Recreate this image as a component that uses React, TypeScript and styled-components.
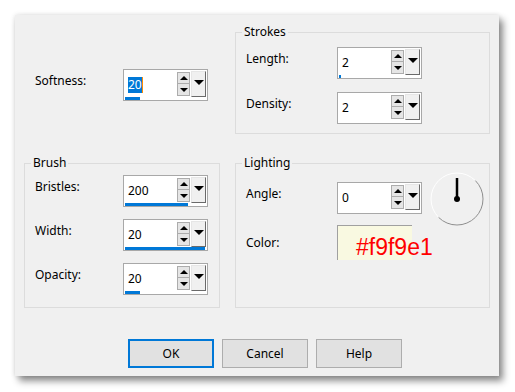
import React from "react";
import styled, { createGlobalStyle } from "styled-components";

const GlobalStyle = createGlobalStyle`
  html, body {
    margin: 0;
    padding: 0;
    background: #ffffff;
  }
  body {
    font-family: "Noto Sans", "Segoe UI", sans-serif;
    font-size: 12px;
    color: #000000;
  }
`;

const Page = styled.div`
  width: 515px;
  height: 392px;
  padding: 15px 0 0 15px;
  box-sizing: border-box;
`;

const Dialog = styled.div`
  width: 484px;
  height: 361px;
  box-sizing: border-box;
  background: #f0f0f0;
  padding: 9px 11px 0 9px;
  box-shadow: 4px 5px 7px rgba(0, 0, 0, 0.45), 0 0 5px rgba(0, 0, 0, 0.12);
  display: flex;
  flex-direction: column;
`;

const Grid = styled.div`
  display: grid;
  grid-template-columns: 196px 255px;
  grid-template-rows: 110px 153px;
  column-gap: 15px;
  row-gap: 21px;
`;

const Cell = styled.div`
  padding: 45px 0 0 11px;
`;

const Group = styled.fieldset`
  margin: 0;
  padding: 0;
  min-width: 0;
  border: 1px solid #dcdcdc;
  box-sizing: border-box;
  height: 100%;
`;

const Legend = styled.legend`
  margin-left: 6px;
  padding: 0 2px;
  line-height: 16px;
  font-size: 12px;
`;

const Rows = styled.div<{ $top: number; $gap: number }>`
  display: flex;
  flex-direction: column;
  padding: ${(p) => p.$top}px 0 0 10px;
  gap: ${(p) => p.$gap}px;
`;

const Row = styled.div<{ $center?: boolean }>`
  display: flex;
  align-items: ${(p) => (p.$center ? "center" : "flex-start")};
`;

const Label = styled.div<{ $w: number; $center?: boolean }>`
  width: ${(p) => p.$w}px;
  flex-shrink: 0;
  line-height: 16px;
  padding-top: ${(p) => (p.$center ? 0 : 4)}px;
`;

const Spin = styled.div`
  width: 85px;
  height: 32px;
  box-sizing: border-box;
  border: 1px solid #a8a8a8;
  background: #ffffff;
  display: flex;
  flex-direction: column;
  flex-shrink: 0;
`;

const SpinBody = styled.div`
  display: flex;
  height: 27px;
`;

const SpinText = styled.div`
  flex: 1;
  display: flex;
  align-items: center;
  padding: 2px 0 0 4px;
  line-height: 16px;
`;

const Selected = styled.span`
  background: #0078d7;
  color: #ffffff;
  border-right: 1px solid #ff8c00;
`;

const Arrows = styled.div`
  width: 13px;
  margin: 2px 1px 0 0;
  display: flex;
  flex-direction: column;
`;

const ArrowBtn = styled.div<{ $down?: boolean }>`
  height: 12px;
  box-sizing: border-box;
  border: 1px solid #acacac;
  border-top: ${(p) => (p.$down ? "none" : "1px solid #acacac")};
  background: #e5e5e5;
  display: flex;
  align-items: center;
  justify-content: center;
`;

const Tri = styled.span<{ $down?: boolean; $size: number }>`
  width: 0;
  height: 0;
  border-left: ${(p) => p.$size}px solid transparent;
  border-right: ${(p) => p.$size}px solid transparent;
  ${(p) =>
    p.$down
      ? `border-top: ${p.$size}px solid #000;`
      : `border-bottom: ${p.$size}px solid #000;`}
`;

const Drop = styled.div`
  width: 15px;
  height: 26px;
  margin: 1px 1px 0 0;
  box-sizing: border-box;
  background: #f0f0f0;
  border-top: 1px solid #e6e6e6;
  border-left: 1px solid #e6e6e6;
  border-right: 1px solid #6a6a6a;
  border-bottom: 1px solid #6a6a6a;
  display: flex;
  align-items: center;
  justify-content: center;
  padding-bottom: 3px;
`;

const Track = styled.div`
  height: 3px;
  padding-left: 1px;
`;

const Fill = styled.div`
  height: 3px;
  background: #0078d7;
`;

const Swatch = styled.div`
  width: 75px;
  height: 35px;
  box-sizing: border-box;
  background: #f9f9e1;
  border-top: 1px solid #a0a0a0;
  border-left: 1px solid #a0a0a0;
  padding: 8px 0 0 18px;
  white-space: nowrap;
`;

const SwatchText = styled.span`
  font-family: "Liberation Sans", Arial, sans-serif;
  font-size: 23px;
  line-height: 26px;
  color: #ff0000;
`;

const Dial = styled.svg`
  flex-shrink: 0;
  margin: -11px 0 -13px 7px;
`;

const ButtonRow = styled.div`
  display: flex;
  gap: 8px;
  margin-top: 31px;
  padding-left: 104px;
`;

const Button = styled.div<{ $primary?: boolean }>`
  width: 86px;
  height: 29px;
  box-sizing: border-box;
  background: #e1e1e1;
  border: ${(p) => (p.$primary ? "2px solid #0078d7" : "1px solid #adadad")};
  display: flex;
  align-items: center;
  justify-content: center;
  line-height: 16px;
`;

function SpinBox({
  value,
  fill,
  selected,
}: {
  value: string;
  fill: number;
  selected?: boolean;
}) {
  return (
    <Spin>
      <SpinBody>
        <SpinText>{selected ? <Selected>{value}</Selected> : value}</SpinText>
        <Arrows>
          <ArrowBtn>
            <Tri $size={4} />
          </ArrowBtn>
          <ArrowBtn $down>
            <Tri $size={4} $down />
          </ArrowBtn>
        </Arrows>
        <Drop>
          <Tri $size={5} $down />
        </Drop>
      </SpinBody>
      <Track>
        <Fill style={{ width: `${Math.round(fill * 80)}px` }} />
      </Track>
    </Spin>
  );
}

function AngleDial() {
  return (
    <Dial width="56" height="56" viewBox="0 0 56 56">
      <circle cx="28" cy="28" r="26" fill="none" stroke="#ffffff" strokeWidth="1" />
      <path d="M 46.4 9.6 A 26 26 0 0 1 9.6 46.4" fill="none" stroke="#8a8a8a" strokeWidth="1" />
      <line x1="28" y1="28" x2="28" y2="7" stroke="#000" strokeWidth="2.5" />
      <circle cx="28" cy="28" r="3" fill="#000" />
    </Dial>
  );
}

export default function App() {
  return (
    <Page>
      <GlobalStyle />
      <Dialog>
        <Grid>
          <Cell>
            <Row>
              <Label $w={88}>Softness:</Label>
              <SpinBox value="20" fill={0.19} selected />
            </Row>
          </Cell>
          <Group>
            <Legend>Strokes</Legend>
            <Rows $top={7} $gap={13}>
              <Row>
                <Label $w={91}>Length:</Label>
                <SpinBox value="2" fill={0.03} />
              </Row>
              <Row>
                <Label $w={91}>Density:</Label>
                <SpinBox value="2" fill={0} />
              </Row>
            </Rows>
          </Group>
          <Group>
            <Legend>Brush</Legend>
            <Rows $top={4} $gap={12}>
              <Row>
                <Label $w={88}>Bristles:</Label>
                <SpinBox value="200" fill={0.79} />
              </Row>
              <Row>
                <Label $w={88}>Width:</Label>
                <SpinBox value="20" fill={1} />
              </Row>
              <Row>
                <Label $w={88}>Opacity:</Label>
                <SpinBox value="20" fill={0.19} />
              </Row>
            </Rows>
          </Group>
          <Group>
            <Legend>Lighting</Legend>
            <Rows $top={11} $gap={11}>
              <Row>
                <Label $w={91}>Angle:</Label>
                <SpinBox value="0" fill={0} />
                <AngleDial />
              </Row>
              <Row $center>
                <Label $w={91} $center>
                  Color:
                </Label>
                <Swatch>
                  <SwatchText>#f9f9e1</SwatchText>
                </Swatch>
              </Row>
            </Rows>
          </Group>
        </Grid>
        <ButtonRow>
          <Button $primary>OK</Button>
          <Button>Cancel</Button>
          <Button>Help</Button>
        </ButtonRow>
      </Dialog>
    </Page>
  );
}
